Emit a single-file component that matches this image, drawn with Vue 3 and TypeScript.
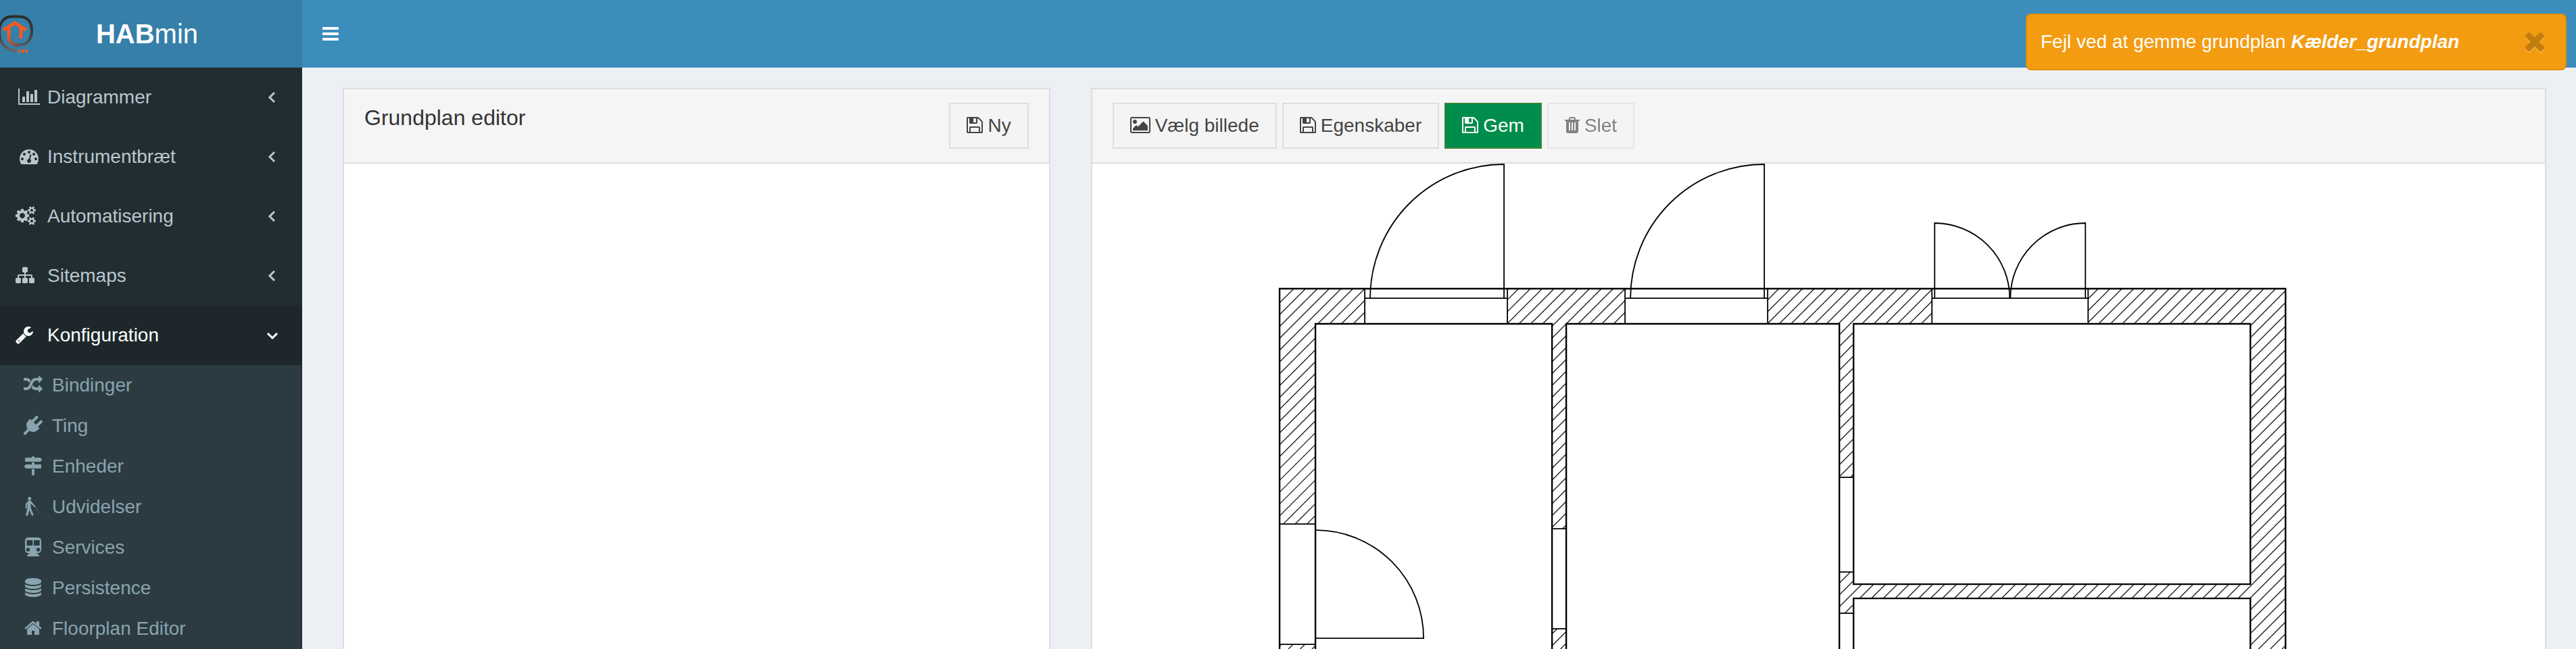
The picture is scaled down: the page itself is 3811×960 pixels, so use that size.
<script setup lang="ts">
import { ref } from 'vue'

interface Icon {
  box: string
  width: number
  d: string
}

const icons: Record<string, Icon> = {
  chart: { box: '0 0 2048 1792', width: 32, d: 'M640 896v512h-256v-512h256zm384-512v1024h-256v-1024h256zm1024 1152v128h-2048v-1536h128v1408h1920zm-640-896v768h-256v-768h256zm384-384v1152h-256v-1152h256z' },
  dashboard: { box: '0 0 1792 1792', width: 28, d: 'M384 1152q0-53-37.5-90.5t-90.5-37.5-90.5 37.5-37.5 90.5 37.5 90.5 90.5 37.5 90.5-37.5 37.5-90.5zm192-448q0-53-37.5-90.5t-90.5-37.5-90.5 37.5-37.5 90.5 37.5 90.5 90.5 37.5 90.5-37.5 37.5-90.5zm428 481l101-382q6-26-7.5-48.5t-38.5-29.5-48 6.5-30 39.5l-101 382q-60 5-107 43.5t-63 98.5q-20 77 20 146t117 89 146-20 89-117q16-60-6-117t-72-91zm660-33q0-53-37.5-90.5t-90.5-37.5-90.5 37.5-37.5 90.5 37.5 90.5 90.5 37.5 90.5-37.5 37.5-90.5zm-640-640q0-53-37.5-90.5t-90.5-37.5-90.5 37.5-37.5 90.5 37.5 90.5 90.5 37.5 90.5-37.5 37.5-90.5zm448 192q0-53-37.5-90.5t-90.5-37.5-90.5 37.5-37.5 90.5 37.5 90.5 90.5 37.5 90.5-37.5 37.5-90.5zm320 448q0 261-141 483-19 29-54 29h-1402q-35 0-54-29-141-221-141-483 0-182 71-348t191-286 286-191 348-71 348 71 286 191 191 286 71 348z' },
  cogs: { box: '0 0 1920 1792', width: 30, d: 'M896 896q0-106-75-181t-181-75-181 75-75 181 75 181 181 75 181-75 75-181zm768 512q0-52-38-90t-90-38-90 38-38 90q0 53 37.5 90.5t90.5 37.5 90.5-37.5 37.5-90.5zm0-1024q0-52-38-90t-90-38-90 38-38 90q0 53 37.5 90.5t90.5 37.5 90.5-37.5 37.5-90.5zm-384 421v185q0 10-7 19.5t-16 10.5l-155 24q-11 35-32 76 34 48 90 115 7 11 7 20 0 12-7 19-23 30-82.5 89.5t-78.5 59.5q-11 0-21-7l-115-90q-37 19-77 31-11 108-23 155-7 24-30 24h-186q-11 0-20-7.5t-10-17.5l-23-153q-34-10-75-31l-118 89q-7 7-20 7-11 0-21-8-144-133-144-160 0-9 7-19 10-14 41-53t47-61q-23-44-35-82l-152-24q-10-1-17-9.5t-7-19.5v-185q0-10 7-19.5t16-10.5l155-24q11-35 32-76-34-48-90-115-7-11-7-20 0-12 7-20 22-30 82-89t79-59q11 0 21 7l115 90q34-18 77-32 11-108 23-154 7-24 30-24h186q11 0 20 7.5t10 17.5l23 153q34 10 75 31l118-89q8-7 20-7 11 0 21 8 144 133 144 160 0 8-7 19-12 16-42 54t-45 60q23 48 34 82l152 23q10 2 17 10.5t7 19.5zm640 533v140q0 16-149 31-12 27-30 52 51 113 51 138 0 4-4 7-122 71-124 71-8 0-46-47t-52-68q-20 2-30 2t-30-2q-14 21-52 68t-46 47q-2 0-124-71-4-3-4-7 0-25 51-138-18-25-30-52-149-15-149-31v-140q0-16 149-31 13-29 30-52-51-113-51-138 0-4 4-7 4-2 35-20t59-34 30-16q8 0 46 46.5t52 67.5q20-2 30-2t30 2q51-71 92-112l6-2q4 0 124 70 4 3 4 7 0 25-51 138 17 23 30 52 149 15 149 31zm0-1024v140q0 16-149 31-12 27-30 52 51 113 51 138 0 4-4 7-122 71-124 71-8 0-46-47t-52-68q-20 2-30 2t-30-2q-14 21-52 68t-46 47q-2 0-124-71-4-3-4-7 0-25 51-138-18-25-30-52-149-15-149-31v-140q0-16 149-31 13-29 30-52-51-113-51-138 0-4 4-7 4-2 35-20t59-34 30-16q8 0 46 46.5t52 67.5q20-2 30-2t30 2q51-71 92-112l6-2q4 0 124 70 4 3 4 7 0 25-51 138 17 23 30 52 149 15 149 31z' },
  sitemap: { box: '0 0 1792 1792', width: 28, d: 'M1792 1248v320q0 40-28 68t-68 28h-320q-40 0-68-28t-28-68v-320q0-40 28-68t68-28h96v-192h-512v192h96q40 0 68 28t28 68v320q0 40-28 68t-68 28h-320q-40 0-68-28t-28-68v-320q0-40 28-68t68-28h96v-192h-512v192h96q40 0 68 28t28 68v320q0 40-28 68t-68 28h-320q-40 0-68-28t-28-68v-320q0-40 28-68t68-28h96v-192q0-52 38-90t90-38h512v-192h-96q-40 0-68-28t-28-68v-320q0-40 28-68t68-28h320q40 0 68 28t28 68v320q0 40-28 68t-68 28h-96v192h512q52 0 90 38t38 90v192h96q40 0 68 28t28 68z' },
  wrench: { box: '64 0 1792 1792', width: 28, d: 'M448 1472q0-26-19-45t-45-19-45 19-19 45 19 45 45 19 45-19 19-45zm644-420l-682 682q-37 37-90 37-52 0-91-37l-106-108q-38-36-38-90 0-53 38-91l681-681q39 98 114.5 173.5t173.5 114.5zm634-435q0 39-23 106-47 134-164.5 217.5t-258.5 83.5q-185 0-316.5-131.5t-131.5-316.5 131.5-316.5 316.5-131.5q58 0 121.5 16.5t107.5 46.5q16 11 16 28t-16 28l-293 169v224l193 107q5-3 79-48.5t135.5-81 70.5-35.5q15 0 23.5 10t8.5 25z' },
  random: { box: '0 0 1792 1792', width: 28, d: 'M666 481q-60 92-137 273-22-45-37-72.5t-40.5-63.5-51-56.5-63-35-81.5-14.5h-224q-14 0-23-9t-9-23v-192q0-14 9-23t23-9h224q250 0 410 225zm1126 799q0 14-9 23l-320 320q-9 9-23 9-13 0-22.5-9.5t-9.5-22.5v-192q-32 0-85 .5t-81 1-73-1-71-5-64-10.5-63-18.5-58-28.5-59-40-55-53.5-56-69.5q59-93 136-273 22 45 37 72.5t40.5 63.5 51 56.5 63 35 81.5 14.5h256v-192q0-14 9-23t23-9q12 0 24 10l319 319q9 9 9 23zm0-896q0 14-9 23l-320 320q-9 9-23 9-13 0-22.5-9.5t-9.5-22.5v-192h-256q-48 0-87 15t-69 45-51 61.5-45 77.5q-32 62-78 171-29 66-49.5 111t-54 105-64 100-74 83-90 68.5-106.5 42-128 16.5h-224q-14 0-23-9t-9-23v-192q0-14 9-23t23-9h224q48 0 87-15t69-45 51-61.5 45-77.5q32-62 78-171 29-66 49.5-111t54-105 64-100 74-83 90-68.5 106.5-42 128-16.5h256v-192q0-14 9-23t23-9q12 0 24 10l319 319q9 9 9 23z' },
  plug: { box: '0 0 1792 1792', width: 28, d: 'M1755 453q37 38 37 90.5t-37 90.5l-401 400 150 150-160 160q-163 163-389.5 186.5t-411.5-100.5l-362 362h-181v-181l362-362q-124-185-100.5-411.5t186.5-389.5l160-160 150 150 400-401q38-37 91-37t90 37 37 90.5-37 90.5l-400 401 234 234 401-400q38-37 91-37t90 37z' },
  signs: { box: '0 0 1792 1792', width: 28, d: 'M1745 297q10 10 10 23t-10 23l-141 141q-28 28-68 28h-1344q-26 0-45-19t-19-45v-256q0-26 19-45t45-19h576v-64q0-26 19-45t45-19h128q26 0 45 19t19 45v64h512q40 0 68 28zm-977 919h256v512q0 26-19 45t-45 19h-128q-26 0-45-19t-19-45v-512zm832-448q26 0 45 19t19 45v256q0 26-19 45t-45 19h-1344q-40 0-68-28l-141-141q-10-10-10-23t10-23l141-141q28-28 68-28h512v-192h256v192h576z' },
  blind: { box: '0 0 28 28', width: 28, d: 'M8.700 0a2.500 2.500 0 1 1 0 5a2.500 2.500 0 1 1 0-5zM7.200 5.600h3.200l6.800 8.200l8 14.200l-8-13l-.8.400-5.800-5.600v6.500l3.800 9.800q.4 1.900-1.500 1.900q-.9 0-1.400-1.200l-3-7.500-2 7.500q-.4 1.200-1.600 1.200q-1.800-.2-1.500-2l2.200-9.300v-6.500l-.8 1.200v5.200q-.2 1-1 1t-1-1v-6.200z' },
  subway: { box: '-2 0 28 28', width: 28, d: 'M6 0h12q6 0 6 5v13q0 5-6 5.500h-.8l3.800 3v1.500h-18v-1.500l3.800-3h-.8q-6-.5-6-5.500v-13q0-5 6-5zM2.500 4v8h8.800v-8zM13 4v8h8.700v-8zM4.500 15.300a2.700 2.700 0 1 0 0 5.400a2.700 2.700 0 1 0 0-5.400zM19.500 15.300a2.700 2.700 0 1 0 0 5.400a2.700 2.700 0 1 0 0-5.400z' },
  database: { box: '0 0 1792 1792', width: 28, d: 'M896 768q237 0 443-43t325-127v170q0 69-103 128t-280 93.5-385 34.5-385-34.5-280-93.5-103-128v-170q119 84 325 127t443 43zm0 768q237 0 443-43t325-127v170q0 69-103 128t-280 93.500-385 34.500-385-34.500-280-93.500-103-128v-170q119 84 325 127t443 43zm0-384q237 0 443-43t325-127v170q0 69-103 128t-280 93.500-385 34.500-385-34.500-280-93.500-103-128v-170q119 84 325 127t443 43zm0-1152q208 0 385 34.500t280 93.500 103 128v128q0 69-103 128t-280 93.500-385 34.500-385-34.500-280-93.500-103-128v-128q0-69 103-128t280-93.500 385-34.500z' },
  home: { box: '0 0 1792 1792', width: 28, d: 'M1472 992v480q0 26-19 45t-45 19h-384v-384h-256v384h-384q-26 0-45-19t-19-45v-480q0-1 .5-3t.5-3l575-474 575 474q1 2 1 6zm223-69l-62 74q-8 9-21 11h-3q-13 0-21-7l-692-577-692 577q-12 8-24 7-13-2-21-11l-62-74q-8-10-7-23.500t11-21.500l719-599q32-26 76-26t76 26l244 204v-195q0-14 9-23t23-9h192q14 0 23 9t9 23v408l219 182q10 8 11 21.500t-7 23.500z' },
  save: { box: '128 0 1536 1792', width: 24, d: 'M512 1536h768v-384h-768v384zm896 0h128v-896q0-14-10-38.500t-20-34.500l-281-281q-10-10-34-20t-39-10v416q0 40-28 68t-68 28h-576q-40 0-68-28t-28-68v-416h-128v1280h128v-416q0-40 28-68t68-28h832q40 0 68 28t28 68v416zm-384-928v-320q0-13-9.500-22.500t-22.500-9.500h-192q-13 0-22.500 9.500t-9.500 22.500v320q0 13 9.500 22.500t22.500 9.500h192q13 0 22.500-9.500t9.500-22.500zm640 32v928q0 40-28 68t-68 28h-1344q-40 0-68-28t-28-68v-1344q0-40 28-68t68-28h928q40 0 88 20t76 48l280 280q28 28 48 76t20 88z' },
  picture: { box: '-64 0 1920 1792', width: 30, d: 'M576 576q0 80-56 136t-136 56-136-56-56-136 56-136 136-56 136 56 56 136zm1024 384v448h-1408v-192l320-320 160 160 512-512zm96-704h-1600q-13 0-22.500 9.500t-9.500 22.500v1216q0 13 9.500 22.500t22.500 9.500h1600q13 0 22.500-9.500t9.500-22.500v-1216q0-13-9.500-22.500t-22.500-9.500zm160 32v1216q0 66-47 113t-113 47h-1600q-66 0-113-47t-47-113v-1216q0-66 47-113t113-47h1600q66 0 113 47t47 113z' },
  trash: { box: '192 0 1408 1792', width: 22, d: 'M704 1376v-704q0-14-9-23t-23-9h-64q-14 0-23 9t-9 23v704q0 14 9 23t23 9h64q14 0 23-9t9-23zm256 0v-704q0-14-9-23t-23-9h-64q-14 0-23 9t-9 23v704q0 14 9 23t23 9h64q14 0 23-9t9-23zm256 0v-704q0-14-9-23t-23-9h-64q-14 0-23 9t-9 23v704q0 14 9 23t23 9h64q14 0 23-9t9-23zm-544-992h448l-48-117q-7-9-17-11h-317q-10 2-17 11zm928 32v64q0 14-9 23t-23 9h-96v948q0 83-47 143.500t-113 60.500h-832q-66 0-113-58.500t-47-141.500v-952h-96q-14 0-23-9t-9-23v-64q0-14 9-23t23-9h309l70-167q15-37 54-63t79-26h320q40 0 79 26t54 63l70 167h309q14 0 23 9t9 23z' },
}

const menu = [
  { label: 'Diagrammer', icon: 'chart', centered: true },
  { label: 'Instrumentbræt', icon: 'dashboard', centered: true },
  { label: 'Automatisering', icon: 'cogs', centered: false },
  { label: 'Sitemaps', icon: 'sitemap', centered: false },
]

const configMenu = [
  { label: 'Bindinger', icon: 'random' },
  { label: 'Ting', icon: 'plug' },
  { label: 'Enheder', icon: 'signs' },
  { label: 'Udvidelser', icon: 'blind' },
  { label: 'Services', icon: 'subway' },
  { label: 'Persistence', icon: 'database' },
  { label: 'Floorplan Editor', icon: 'home' },
]

const tools = [
  { label: 'Vælg billede', icon: 'picture', primary: false, disabled: false },
  { label: 'Egenskaber', icon: 'save', primary: false, disabled: false },
  { label: 'Gem', icon: 'save', primary: true, disabled: false },
  { label: 'Slet', icon: 'trash', primary: false, disabled: true },
]

const configOpen = ref(true)
const alertOpen = ref(true)

// Diagonal hatching that fills the walls: lines of constant x + y
const hatchStep = 17.5
const hatch = Array.from({ length: 140 }, (_, i) => {
  const sum = 2341 + i * hatchStep
  return `M${sum - 420} 420L${sum - 1160} 1160`
}).join('')
</script>

<template>
  <div class="shell">
    <header class="topbar">
      <a class="logo" href="#">
        <svg class="logo-mark" width="50" height="60" viewBox="0 20 50 60" aria-hidden="true">
          <defs>
            <linearGradient id="ring" gradientUnits="userSpaceOnUse" x1="0" y1="22" x2="0" y2="77">
              <stop offset="0" stop-color="#2a2a2a" />
              <stop offset="0.5" stop-color="#3c3c3c" />
              <stop offset="1" stop-color="#6a6a6a" />
            </linearGradient>
            <linearGradient id="pillar" gradientUnits="userSpaceOnUse" x1="13" y1="52" x2="28" y2="67">
              <stop offset="0" stop-color="#f15a24" />
              <stop offset="1" stop-color="#5c5652" />
            </linearGradient>
          </defs>
          <g fill="none" stroke-width="4">
            <path stroke="url(#ring)" d="M26 66.500H29C40 66.500 47 58 47 45.500C47 32 40 24.500 28 24.500H17C6 24.500-1 34-1 47C-1 64 9 75 25 75" />
            <path stroke="url(#pillar)" stroke-width="5" d="M13 39V53Q13 66.500 28 66.500" />
            <path stroke="#f15a24" stroke-width="5" d="M5 44.500L22 34L39 44.500M31 40V57" />
          </g>
          <path fill="#f15a24" d="M27 73h3v5h-3zM32 73h3v5h-3zM37 73h4v5h-4z" />
        </svg>
        <span><b>HAB</b>min</span>
      </a>
      <button class="toggle" type="button" aria-label="Menu">
        <svg width="26" height="20" viewBox="0 0 26 20" fill="currentColor">
          <rect x="1" width="24" height="4" rx="1" />
          <rect x="1" y="8" width="24" height="4" rx="1" />
          <rect x="1" y="16" width="24" height="4" rx="1" />
        </svg>
      </button>
    </header>

    <div class="body">
      <nav class="sidebar">
        <ul>
          <li v-for="item in menu" :key="item.label">
            <a class="item" href="#">
              <span class="icon" :class="{ centered: item.centered }">
                <svg :width="icons[item.icon].width" height="28" :viewBox="icons[item.icon].box"><path :d="icons[item.icon].d" /></svg>
              </span>
              <span>{{ item.label }}</span>
              <svg class="arrow" width="18" height="18" viewBox="0 0 18 18"><path d="M12 2L5 9L12 16" /></svg>
            </a>
          </li>
          <li>
            <a class="item active" href="#" @click.prevent="configOpen = !configOpen">
              <span class="icon">
                <svg :width="icons.wrench.width" height="28" :viewBox="icons.wrench.box"><path :d="icons.wrench.d" /></svg>
              </span>
              <span>Konfiguration</span>
              <svg class="arrow" width="18" height="18" viewBox="0 0 18 18"><path d="M2 6L9 13L16 6" /></svg>
            </a>
            <ul v-if="configOpen" class="submenu">
              <li v-for="item in configMenu" :key="item.label">
                <a class="subitem" href="#">
                  <span class="icon centered">
                    <svg :width="icons[item.icon].width" height="28" :viewBox="icons[item.icon].box"><path fill-rule="evenodd" :d="icons[item.icon].d" /></svg>
                  </span>
                  <span>{{ item.label }}</span>
                </a>
              </li>
            </ul>
          </li>
        </ul>
      </nav>

      <main class="content">
        <div class="col narrow">
          <section class="panel">
            <div class="panel-head">
              <h1>Grundplan editor</h1>
              <button class="btn" type="button">
                <svg width="24" height="28" :viewBox="icons.save.box"><path :d="icons.save.d" /></svg>
                Ny
              </button>
            </div>
          </section>
        </div>

        <div class="col wide">
          <section class="panel">
            <div class="panel-head tools">
              <button v-for="tool in tools" :key="tool.label" class="btn" :class="{ primary: tool.primary }" type="button" :disabled="tool.disabled">
                <svg :width="icons[tool.icon].width" height="28" :viewBox="icons[tool.icon].box"><path :d="icons[tool.icon].d" /></svg>
                {{ tool.label }}
              </button>
            </div>
            <svg class="plan" viewBox="1616 242 2149 900" role="img" aria-label="Kælder_grundplan">
              <defs>
                <clipPath id="walls">
                  <path d="M1893 427H2019V479H1946V775H1893zM1893 953H1946V1142H1893z" />
                  <path d="M2230 427H2404V479H2317V782H2296V479H2230zM2296 930H2317V1142H2296z" />
                  <path d="M2615 427H2858V479H2742V706H2721V479H2615z" />
                  <path d="M2721 846H2742V864H3329V479H3089V427H3381V1142H3329V885H2742V907H2721z" />
                </clipPath>
              </defs>
              <path class="hatch" clip-path="url(#walls)" :d="hatch" />
              <g class="thin">
                <path d="M2019 427V479M2230 427V479M2404 427V479M2615 427V479M2858 427V479M3089 427V479" />
                <path d="M2019 441H2230M2404 441H2615M2858 441H3089" />
                <path d="M2225 441V243A198 198 0 0 0 2027 441" />
                <path d="M2610 441V243A198 198 0 0 0 2412 441" />
                <path d="M2862 441V330A111 111 0 0 1 2973 441" />
                <path d="M3085 441V330A111 111 0 0 0 2974 441" />
                <path d="M1946 784A160 160 0 0 1 2106 944H1946" />
                <path d="M1893 775H1946M1893 953H1946M2296 782H2317M2296 930H2317M2721 706H2742M2721 846H2742M2721 907H2742" />
              </g>
              <g class="thick">
                <path d="M1893 1142V427H3381V1142" />
                <path d="M1946 1142V479H2296V1142" />
                <path d="M2317 1142V479H2721V1142" />
                <path d="M2742 479H3329V864H2742z" />
                <path d="M2742 1142V885H3329V1142" />
              </g>
            </svg>
          </section>
        </div>
      </main>
    </div>

    <div v-if="alertOpen" class="alert" role="alert">
      <span>Fejl ved at gemme grundplan <b><i>Kælder_grundplan</i></b></span>
      <button type="button" aria-label="Luk" @click="alertOpen = false">
        <svg width="28" height="28" viewBox="302 366 1188 1188">
          <path d="M1490 1322q0 40-28 68l-136 136q-28 28-68 28t-68-28l-294-294-294 294q-28 28-68 28t-68-28l-136-136q-28-28-28-68t28-68l294-294-294-294q-28-28-28-68t28-68l136-136q28-28 68-28t68 28l294 294 294-294q28-28 68-28t68 28l136 136q28 28 28 68t-28 68l-294 294 294 294q28 28 28 68z" />
        </svg>
      </button>
    </div>
  </div>
</template>

<style>
body {
  margin: 0;
  background: #ecf0f5;
}
</style>

<style scoped>
.shell {
  position: relative;
  display: flex;
  flex-direction: column;
  height: 100vh;
  overflow: hidden;
  font: 28px/40px "Liberation Sans", Arial, sans-serif;
  color: #333;
}

.shell *,
.shell {
  box-sizing: border-box;
}

ul {
  margin: 0;
  padding: 0;
  list-style: none;
}

a {
  color: inherit;
  text-decoration: none;
}

button {
  font: inherit;
  cursor: pointer;
}

svg {
  display: block;
  flex: none;
}

/* top bar */
.topbar {
  display: flex;
  flex: none;
  height: 100px;
  background: #3c8dbc;
  color: #fff;
}

.logo {
  display: flex;
  align-items: center;
  width: 447px;
  background: #367fa9;
  font-size: 40px;
  line-height: 100px;
}

.logo span {
  flex: 1;
  padding-right: 62px;
  text-align: center;
}

.toggle {
  padding: 0 29px;
  border: 0;
  background: none;
  color: #fff;
}

/* sidebar */
.body {
  display: flex;
  flex: 1;
  min-height: 0;
}

.sidebar {
  flex: none;
  width: 447px;
  background: #222d32;
  color: #b8c7ce;
}

.item,
.subitem {
  display: flex;
  align-items: center;
}

.item {
  padding: 24px 35px 24px 23px;
}

.item.active {
  background: #1e282c;
  color: #fff;
}

.icon {
  display: flex;
  width: 40px;
  margin: 0 8px 2px 0;
}

.item .icon {
  margin-right: 7px;
}

.icon.centered {
  justify-content: center;
}

.icon svg,
.btn svg {
  fill: currentColor;
}

.arrow {
  margin-left: auto;
  fill: none;
  stroke: currentColor;
  stroke-width: 3;
}

.submenu {
  margin-right: 2px;
  background: #2c3b41;
  color: #8aa4af;
}

.subitem {
  padding: 10px 10px 10px 29px;
}

/* content */
.content {
  display: flex;
  flex: 1;
  min-width: 0;
  padding: 30px 14px 0 30px;
  background: #ecf0f5;
  overflow: hidden;
}

.col {
  flex: none;
  padding: 0 30px;
}

.narrow {
  width: calc(100% / 3);
}

.wide {
  width: calc(200% / 3);
}

.panel {
  min-height: 100vh;
  border: 2px solid #ddd;
  background: #fff;
}

.panel-head {
  display: flex;
  justify-content: space-between;
  padding: 20px 30px;
  border-bottom: 2px solid #ddd;
  background: #f5f5f5;
}

.panel-head.tools {
  justify-content: flex-start;
  gap: 8px;
}

h1 {
  margin: 0;
  font-size: 32px;
  font-weight: 400;
  line-height: 44px;
}

.btn {
  display: flex;
  align-items: center;
  gap: 7px;
  padding: 12px 24px;
  border: 2px solid #ddd;
  background: #f4f4f4;
  color: #444;
}

.btn svg {
  margin-bottom: 2px;
}

.btn.primary {
  border-color: #398439;
  background: #008d4c;
  color: #fff;
}

.btn:disabled {
  opacity: 0.65;
  cursor: not-allowed;
}

.plan {
  width: 100%;
  height: auto;
  fill: none;
  stroke: #000;
}

.hatch {
  stroke: #222;
  stroke-width: 1.4;
}

.thin {
  stroke-width: 1.8;
}

.thick {
  stroke-width: 2.4;
}

/* notification */
.alert {
  position: absolute;
  top: 20px;
  right: 14px;
  display: flex;
  align-items: center;
  justify-content: space-between;
  width: 800px;
  padding: 20px 31px 20px 20px;
  border: 2px solid #e08e0b;
  border-radius: 8px;
  background: #f39c12;
  color: #fff;
}

.alert button {
  padding: 0;
  border: 0;
  background: none;
}

.alert button svg {
  overflow: visible;
  fill: #c27d0e;
  filter: drop-shadow(0 2px 0 rgba(255, 255, 255, 0.2));
}
</style>
